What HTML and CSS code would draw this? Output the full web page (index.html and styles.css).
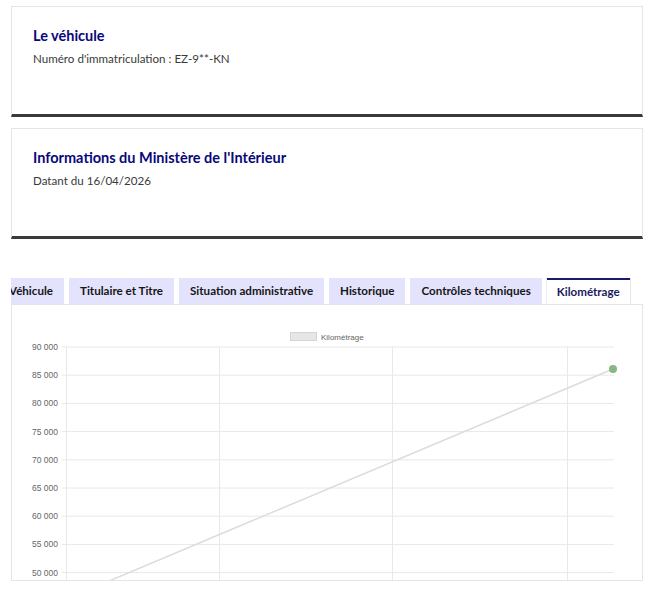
FILE: index.html
```html
<!DOCTYPE html>
<html lang="fr">
<head>
  <meta charset="UTF-8">
  <meta name="viewport" content="width=device-width, initial-scale=1.0">
  <title>Rapport véhicule</title>
  <link rel="stylesheet" href="styles.css">
</head>
<body>
  <div class="page">
    <div class="card">
      <h2 class="card-title">Le véhicule</h2>
      <p class="card-desc">Numéro d'immatriculation : EZ-9**-KN</p>
    </div>

    <div class="card">
      <h2 class="card-title">Informations du Ministère de l'Intérieur</h2>
      <p class="card-desc">Datant du 16/04/2026</p>
    </div>

    <div class="tabs">
      <div class="tab-scroll">
        <ul class="tab-list">
          <li class="tab">Véhicule</li>
          <li class="tab">Titulaire et Titre</li>
          <li class="tab">Situation administrative</li>
          <li class="tab">Historique</li>
          <li class="tab">Contrôles techniques</li>
          <li class="tab active">Kilométrage</li>
        </ul>
      </div>

      <div class="tab-panel">
        <svg class="chart" width="630" height="400" viewBox="0 0 630 400">
          <!-- legend -->
          <rect x="278.5" y="27.5" width="26" height="8" fill="#e6e6e6" stroke="#d4d4d4"/>
          <text x="309" y="34.5" class="legend">Kilométrage</text>

          <!-- grid -->
          <g class="grid">
            <line x1="50" y1="42" x2="602" y2="42"/>
            <line x1="50" y1="70.2" x2="602" y2="70.2"/>
            <line x1="50" y1="98.4" x2="602" y2="98.4"/>
            <line x1="50" y1="126.6" x2="602" y2="126.6"/>
            <line x1="50" y1="154.8" x2="602" y2="154.8"/>
            <line x1="50" y1="183" x2="602" y2="183"/>
            <line x1="50" y1="211.2" x2="602" y2="211.2"/>
            <line x1="50" y1="239.4" x2="602" y2="239.4"/>
            <line x1="50" y1="267.6" x2="602" y2="267.6"/>
            <line x1="50" y1="295.8" x2="602" y2="295.8"/>
            <line x1="54.5" y1="42" x2="54.5" y2="320"/>
            <line x1="207.5" y1="42" x2="207.5" y2="320"/>
            <line x1="380.5" y1="42" x2="380.5" y2="320"/>
            <line x1="555.5" y1="42" x2="555.5" y2="320"/>
          </g>
          <g class="ticks">
            <text x="46" y="45">90 000</text>
            <text x="46" y="73.2">85 000</text>
            <text x="46" y="101.4">80 000</text>
            <text x="46" y="129.6">75 000</text>
            <text x="46" y="157.8">70 000</text>
            <text x="46" y="186">65 000</text>
            <text x="46" y="214.2">60 000</text>
            <text x="46" y="242.4">55 000</text>
            <text x="46" y="270.6">50 000</text>
          </g>

          <!-- data -->
          <line class="data-line" x1="601" y1="64" x2="40" y2="300"/>
          <circle cx="601" cy="64" r="4" fill="#86b886"/>
        </svg>
      </div>
    </div>
  </div>
</body>
</html>
```

FILE: styles.css
```css
body {
  margin: 0;
  background: #fff;
  font-family: Lato, "Noto Sans", Arial, sans-serif;
  color: #161616;
}

.page {
  padding: 6px 11px 0;
}

.card {
  border: 1px solid #e5e5e5;
  border-bottom: 3px solid #3a3a3a;
  padding: 19px 21px 0;
  height: 88px;
  margin-bottom: 11px;
}

.card-title {
  margin: 0;
  font-size: 14.5px;
  font-weight: 700;
  color: #08087a;
  line-height: 20px;
}

.card-desc {
  margin: 5px 0 0;
  font-size: 11.6px;
  color: #3a3a3a;
  line-height: 16px;
}

.tabs {
  margin-top: 39px;
}

.tab-scroll {
  overflow: hidden;
}

.tab-list {
  list-style: none;
  margin: 0 0 0 -13px;
  padding: 0;
  display: flex;
  gap: 5px;
  white-space: nowrap;
}

.tab {
  background: #e3e3fd;
  font-size: 11.6px;
  font-weight: 700;
  line-height: 26px;
  height: 26px;
  padding: 0 11px;
  color: #161616;
}

.tab.active {
  background: #fff;
  color: #1a1a5e;
  border-top: 2px solid #1a1a6e;
  line-height: 24px;
  height: 24px;
  padding: 0 10px;
  box-shadow: 1px 0 0 #e5e5e5, -1px 0 0 #eeeeee;
}

.tab-panel {
  border: 1px solid #e5e5e5;
  height: 275px;
  overflow: hidden;
}

.chart {
  display: block;
}

.grid line {
  stroke: #e8e8e8;
  stroke-width: 1;
}

.ticks text {
  font-family: "Liberation Sans", Arial, sans-serif;
  font-size: 8.5px;
  fill: #666;
  text-anchor: end;
}

.legend {
  font-family: "Liberation Sans", Arial, sans-serif;
  font-size: 8px;
  fill: #666;
}

.data-line {
  stroke: #dcdcdc;
  stroke-width: 1.5;
}
```
